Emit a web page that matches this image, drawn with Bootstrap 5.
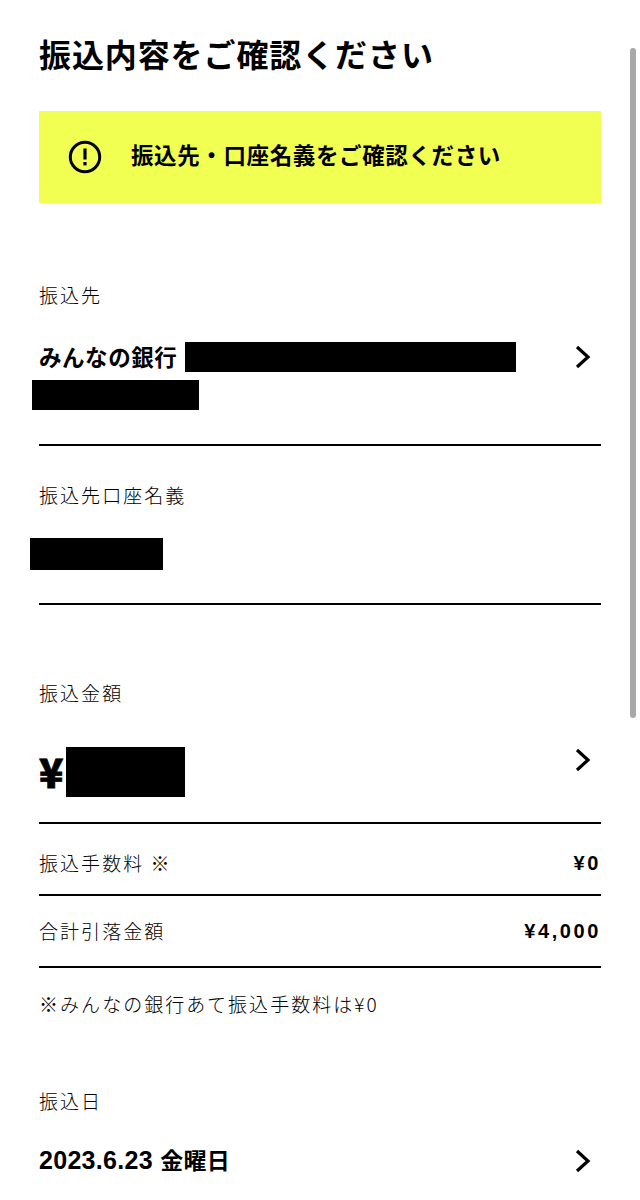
<!DOCTYPE html>
<html lang="ja"><head><meta charset="utf-8">
<link href="https://cdn.jsdelivr.net/npm/bootstrap@5.3.0/dist/css/bootstrap.min.css" rel="stylesheet">
<style>
html,body{height:1200px;overflow:hidden;background:#fff}
body{font-family:"Liberation Sans","Noto Sans CJK JP",sans-serif;color:#000;position:relative}
.page-wrap{padding:0 39px;width:640px}
.page-title{font-family:"Noto Sans CJK JP",sans-serif;font-size:32px;font-weight:700;line-height:44px;padding-top:31px;margin:0;letter-spacing:.9px;height:75px}
.notice-box{background:#f0ff52;height:92px;margin-top:36px;width:562px;padding-left:29px;gap:29px}
.notice-text{font-family:"Noto Sans CJK JP",sans-serif;font-size:22.5px;font-weight:700;letter-spacing:.62px;position:relative;top:-2px}
.field-label{font-family:"Noto Sans CJK JP",sans-serif;font-size:19px;font-weight:300;line-height:26px;letter-spacing:2.05px;color:#000}
.value-row{width:562px;font-weight:700}
.value-text{font-family:"Noto Sans CJK JP",sans-serif;font-size:22.5px;line-height:30px;letter-spacing:.55px}
.date-text{font-size:25px;line-height:30px;letter-spacing:.3px}
.date-text span{font-family:"Noto Sans CJK JP",sans-serif;font-size:23px}
.yen-text{font-family:"Noto Sans CJK JP",sans-serif;font-size:40px;font-weight:900;line-height:50px;-webkit-text-stroke:.8px #000}
.redact{background:#000;position:absolute}
.rule{border-top:2px solid #000;width:562px}
.chev{margin-right:9px;margin-top:2px;flex:none}
.chev-top{align-self:flex-start}
.sbar{position:absolute;left:630px;top:48px;width:6px;height:670px;background:#a8a8a8;border-radius:3px}
.row-line{width:562px;height:70px}
.row-low{padding-top:8px}
.amt{font-weight:700;font-size:20px;letter-spacing:2.6px}
.mt-a{margin-top:79px}.mt-b{margin-top:33px}.mt-c{margin-top:73px}.mt-d{margin-top:36px}.mt-e{margin-top:95px}
.mt-f{margin-top:75px}.mt-g{margin-top:40px}.mt-h{margin-top:26px}.mt-i{margin-top:23px}.mt-j{margin-top:71px}.mt-k{margin-top:30px}
</style></head><body>
<div class="page-wrap">
<h1 class="page-title">振込内容をご確認ください</h1>
<div class="notice-box d-flex align-items-center">
<svg width="34" height="34" viewBox="0 0 34 34"><circle cx="17" cy="17" r="14.7" fill="none" stroke="#000" stroke-width="3"/><rect x="15.4" y="8.5" width="3.2" height="11" fill="#000"/><rect x="15.4" y="22" width="3.2" height="3.4" fill="#000"/></svg>
<span class="notice-text">振込先・口座名義をご確認ください</span></div>
<div class="field-label mt-a">振込先</div>
<div class="value-row d-flex justify-content-between align-items-center mt-b"><span class="value-text">みんなの銀行</span><svg class="chev" width="18" height="24" viewBox="0 0 18 24"><path d="M3 2l11 10L3 22" fill="none" stroke="#000" stroke-width="3.2"/></svg></div>
<div class="rule mt-c"></div>
<div class="field-label mt-d">振込先口座名義</div>
<div class="rule mt-e"></div>
<div class="field-label mt-f">振込金額</div>
<div class="value-row d-flex justify-content-between align-items-center mt-g"><span class="yen-text">¥</span><svg class="chev chev-top" width="18" height="24" viewBox="0 0 18 24"><path d="M3 2l11 10L3 22" fill="none" stroke="#000" stroke-width="3.2"/></svg></div>
<div class="rule mt-h"></div>
<div class="row-line row-low d-flex justify-content-between align-items-center"><span class="field-label">振込手数料 ※</span><span class="amt">¥0</span></div>
<div class="rule"></div>
<div class="row-line d-flex justify-content-between align-items-center"><span class="field-label">合計引落金額</span><span class="amt">¥4,000</span></div>
<div class="rule"></div>
<div class="field-label mt-i">※みんなの銀行あて振込手数料は¥0</div>
<div class="field-label mt-j">振込日</div>
<div class="value-row d-flex justify-content-between align-items-center mt-k"><span class="date-text">2023.6.23 <span>金曜日</span></span><svg class="chev" width="18" height="24" viewBox="0 0 18 24"><path d="M3 2l11 10L3 22" fill="none" stroke="#000" stroke-width="3.2"/></svg></div>
</div>
<div class="redact" style="left:185px;top:342px;width:331px;height:30px"></div>
<div class="redact" style="left:32px;top:380px;width:167px;height:30px"></div>
<div class="redact" style="left:30px;top:538px;width:133px;height:32px"></div>
<div class="redact" style="left:66px;top:747px;width:119px;height:50px"></div>
<div class="sbar"></div>
</body></html>
